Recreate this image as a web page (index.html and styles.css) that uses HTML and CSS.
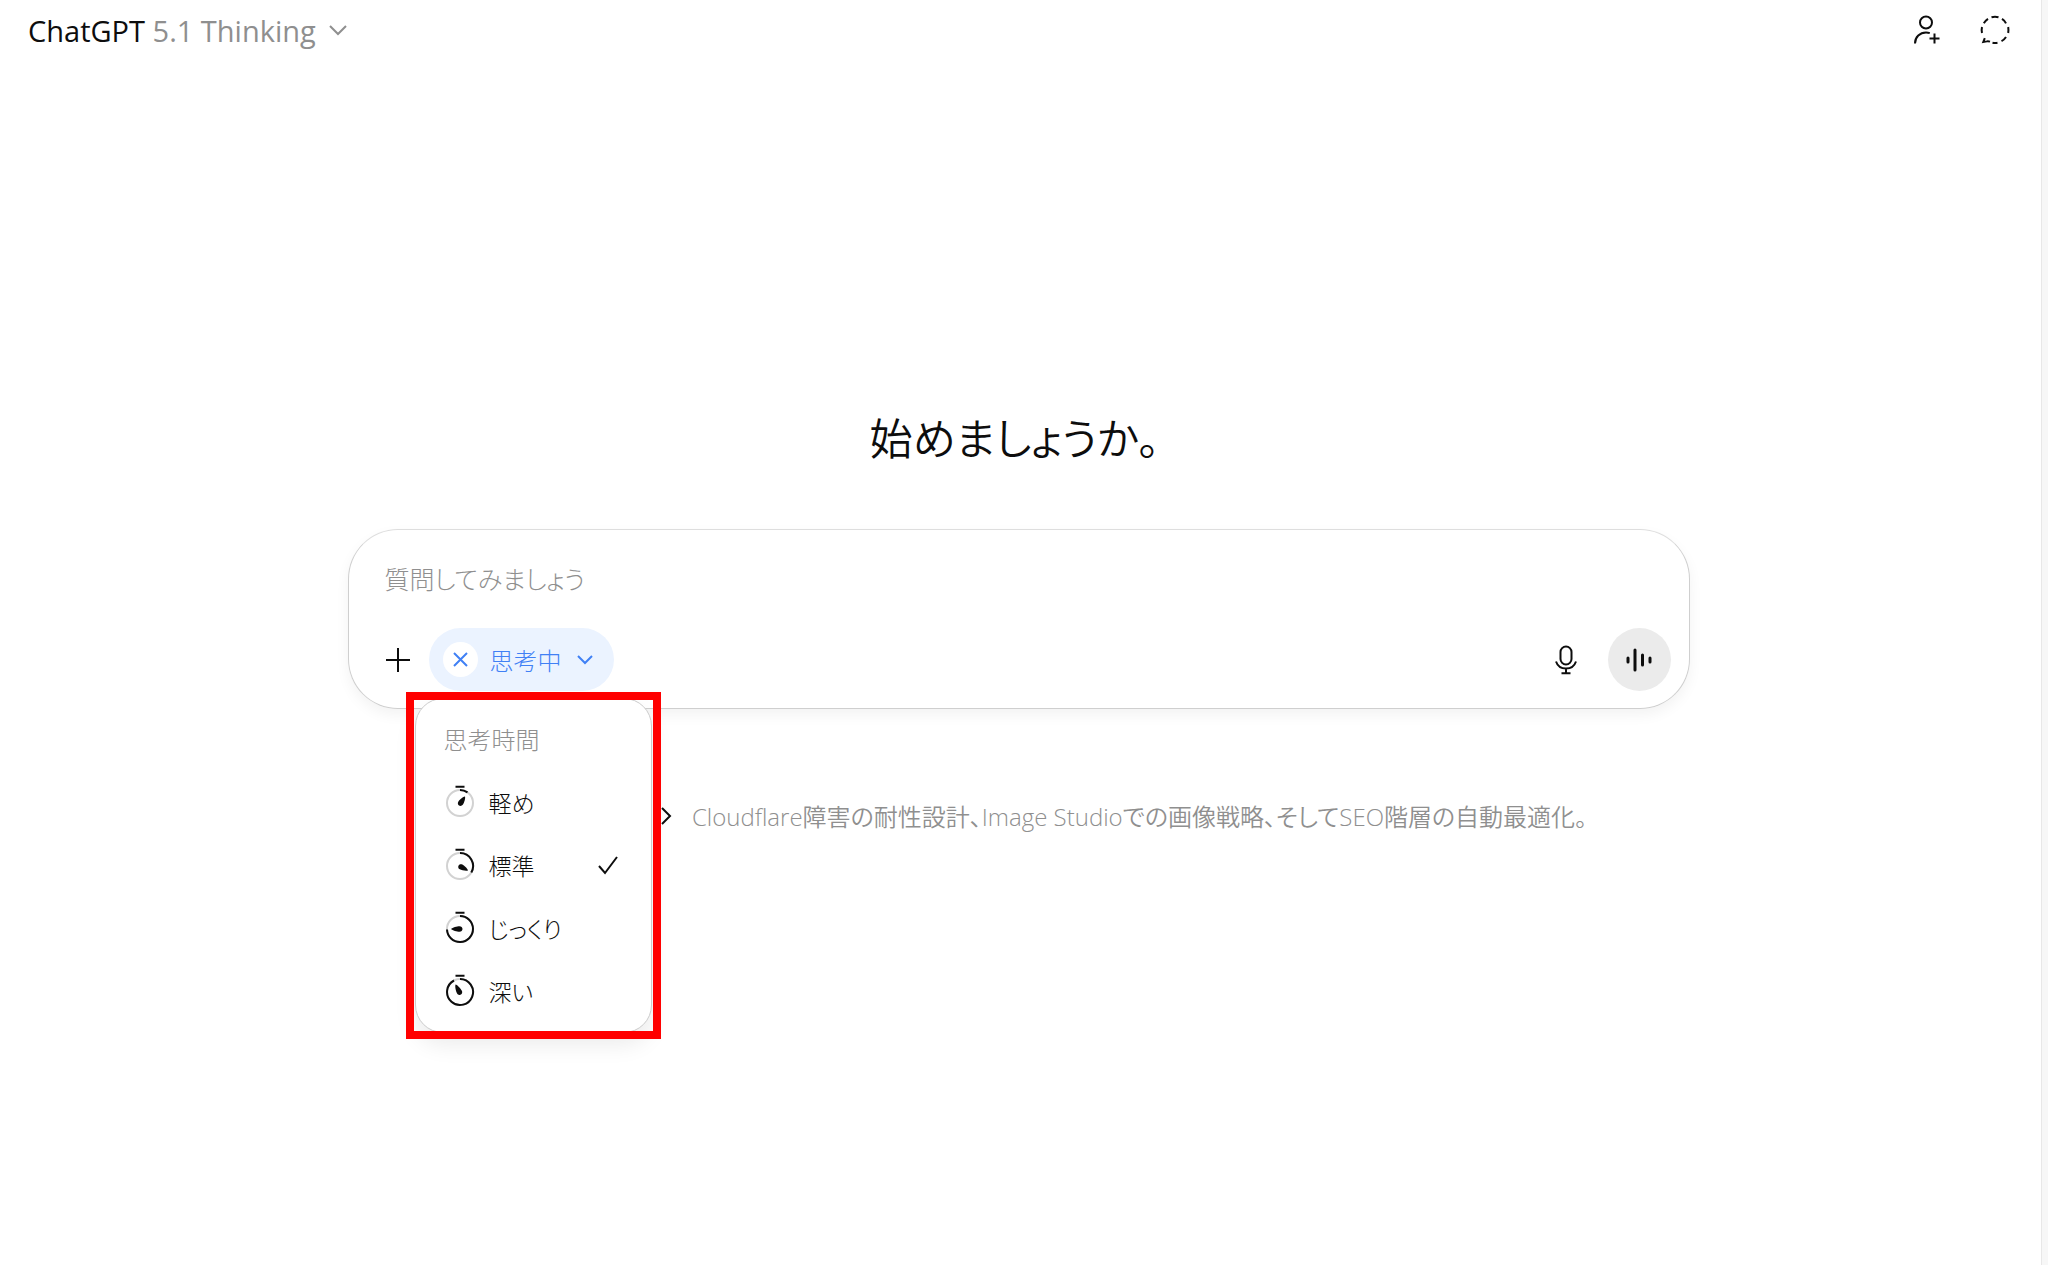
FILE: index.html
```
<!DOCTYPE html>
<html lang="ja">
<head>
    <meta charset="UTF-8">
    <meta name="viewport" content="width=device-width, initial-scale=1.0">
    <title>ChatGPT</title>
    <link rel="stylesheet" href="styles.css">
</head>
<body>
    <div class="app">
        <header class="header">
            <button class="header__model" type="button">
                <span>ChatGPT <span class="header__version">5.1 Thinking</span></span>
                <svg width="20" height="12" viewBox="0 0 20 12"><path d="M2 2l8 8 8-8"/></svg>
            </button>
            <div class="header__actions">
                <button class="icon-button" type="button" aria-label="招待">
                    <svg width="30" height="32" viewBox="0 0 30 32"><circle cx="13" cy="8.5" r="6"/><path d="M2 29.5C2 23 7 18.5 13 18.5c1.300 0 2.600.2 3.800.6M21.500 19.500v10M16.500 24.500h10"/></svg>
                </button>
                <button class="icon-button" type="button" aria-label="一時チャット">
                    <svg width="32" height="32" viewBox="0 0 32 32"><path d="M12.500 3.200q3.500-1 7 0M23 4.800q2.800 1.800 4 4.500M29.200 13q.5 3 0 6M27 23q-1.800 2.800-4.500 4.200M18.500 28.800q-2.500.5-5-.1M11 27.600q-2-.6-3.200-.2L4.300 28l1.500-3.800M3 19q-.700-3 0-6M4.800 9.200Q6.500 6.500 9 4.800"/></svg>
                </button>
            </div>
        </header>
        <main class="main">
            <h1 class="main__title">始めましょうか。</h1>
            <form class="composer">
                <input class="composer__input" type="text" placeholder="質問してみましょう" aria-label="質問してみましょう">
                <div class="composer__tools">
                    <button class="icon-button" type="button" aria-label="追加">
                        <svg width="26" height="26" viewBox="0 0 26 26"><path d="M13 1v24M1 13h24"/></svg>
                    </button>
                    <div class="thinking">
                        <div class="thinking__pill">
                            <button class="thinking__close" type="button" aria-label="解除">
                                <svg width="17" height="17" viewBox="0 0 17 17"><path d="M2 2l13 13M15 2L2 15"/></svg>
                            </button>
                            <button class="thinking__label" type="button" aria-haspopup="menu">
                                思考中
                                <svg width="18" height="12" viewBox="0 0 18 12"><path d="M2 2l7 7 7-7"/></svg>
                            </button>
                        </div>
                        <div class="popover">
                            <div class="menu" role="menu">
                                <div class="menu__title">思考時間</div>
                                <button class="menu__item" type="button" role="menuitem">
                                    <svg width="30" height="34" viewBox="0 0 30 34"><circle class="ring" cx="15" cy="18" r="13"/><path d="M15 5a13 13 0 0 1 7.500 2.400M10.500 1.800h9"/><path class="hand" d="M20 11.500c.6 2-1 6.500-2 8-1 1.400-2.800 1.800-4 1s-1.500-2.500-.7-3.800c1-1.500 4-4.800 6.700-5.200z"/></svg>
                                    軽め
                                </button>
                                <button class="menu__item" type="button" role="menuitem">
                                    <svg width="30" height="34" viewBox="0 0 30 34"><circle class="ring" cx="15" cy="18" r="13"/><path d="M15 5a13 13 0 0 1 11.300 19.500M10.500 1.800h9"/><path class="hand" d="M23 22.500c-2 .7-6.500-.2-8.200-1.200-1.500-.8-2-2.600-1.200-3.900s2.500-1.600 3.800-.8c1.600 1 5 3.600 5.600 5.900z"/></svg>
                                    標準
                                    <svg class="menu__check" width="22" height="20" viewBox="0 0 22 20"><path d="M2 11l6 7L20 2"/></svg>
                                </button>
                                <button class="menu__item" type="button" role="menuitem">
                                    <svg width="30" height="34" viewBox="0 0 30 34"><circle class="ring" cx="15" cy="18" r="13"/><path d="M15 5A13 13 0 1 1 2 18.500M10.500 1.800h9"/><path class="hand" d="M6 18c1.500-1.500 6-2.800 8.500-2.800 1.700 0 3 1.200 3 2.800s-1.300 2.800-3 2.800C12 20.800 7.500 19.500 6 18z"/></svg>
                                    じっくり
                                </button>
                                <button class="menu__item" type="button" role="menuitem">
                                    <svg width="30" height="34" viewBox="0 0 30 34"><circle class="ring" cx="15" cy="18" r="13"/><path d="M15 5A13 13 0 1 1 9 6.500M10.500 1.800h9"/><path class="hand" d="M10.500 10.500c2 .4 5 4 6.200 6 .9 1.400.6 3.200-.7 4s-3 .3-3.900-1.100c-1.200-2-2.300-6.800-1.600-8.900z"/></svg>
                                    深い
                                </button>
                            </div>
                        </div>
                    </div>
                    <div class="composer__voice">
                        <button class="icon-button" type="button" aria-label="音声入力">
                            <svg width="24" height="30" viewBox="0 0 24 30"><rect x="6.500" y="1.500" width="11" height="18" rx="5.500"/><path d="M2 16.500c1.500 4.500 5.500 7 10 7s8.500-2.500 10-7M12 23.500v4.500M7.500 28.200h9"/></svg>
                        </button>
                        <button class="voice-button" type="button" aria-label="音声モード">
                            <svg width="26" height="24" viewBox="0 0 26 24"><path d="M2 10v4M9 2v20M16.500 7v10M24 10v4"/></svg>
                        </button>
                    </div>
                </div>
            </form>
            <a class="suggestion" href="#">
                <svg width="12" height="20" viewBox="0 0 12 20"><path d="M2 2l8 8-8 8"/></svg>
                Cloudflare障害の耐性設計、Image Studioでの画像戦略、そしてSEO階層の自動最適化。
            </a>
        </main>
    </div>
</body>
</html>
```
FILE: styles.css
```
* {
    box-sizing: border-box;
}
body {
    margin: 0;
    padding-right: 6px;
    background-color: #f7f7f7;
    color: #0d0d0d;
    font-family: "Open Sans", "Noto Sans CJK JP", sans-serif;
    font-feature-settings: "palt";
    font-weight: 300;
}
button,
input {
    margin: 0;
    padding: 0;
    border: none;
    background: none;
    color: inherit;
    font: inherit;
    font-feature-settings: inherit;
}
button {
    display: flex;
    align-items: center;
    cursor: pointer;
}
svg {
    flex: none;
    fill: none;
    stroke: currentColor;
    stroke-width: 2;
}
.app {
    min-height: 100vh;
    background-color: #fff;
    border-right: 1px solid #e8e8e8;
}
.header {
    display: flex;
    justify-content: space-between;
    align-items: center;
    height: 60px;
    padding: 0 30px 0 28px;
}
.header__model {
    gap: 12px;
    font-size: 29px;
    font-weight: 400;
}
.header__version,
.header__model svg {
    color: #8f8f8f;
}
.header__actions {
    display: flex;
    gap: 36px;
}
.main {
    display: flex;
    flex-direction: column;
    align-items: center;
    padding: 342px 28px 0 24px;
}
.main__title {
    margin: 0 0 53px;
    padding-right: 8px;
    font-size: 43px;
    font-weight: 350;
    line-height: 74px;
}
/* Caja de mensaje */
.composer {
    width: 100%;
    max-width: 1342px;
    padding: 18px 18px 17px 36px;
    border: 1px solid #cfcfcf;
    border-top-color: #dedede;
    border-radius: 50px;
    box-shadow: 0 6px 14px rgba(0, 0, 0, 0.05);
}
.composer__input {
    display: block;
    width: 100%;
    height: 62px;
    margin-bottom: 18px;
    font-size: 25px;
    outline: none;
}
.composer__input::placeholder {
    color: #8f8f8f;
    opacity: 1;
}
.composer__tools {
    display: flex;
    align-items: center;
}
.composer__voice {
    display: flex;
    align-items: center;
    gap: 30px;
    margin-left: auto;
}
.voice-button {
    justify-content: center;
    width: 63px;
    height: 63px;
    border-radius: 50%;
    background-color: #ebebeb;
}
.voice-button svg {
    stroke-width: 3;
    stroke-linecap: round;
}
.thinking {
    position: relative;
    margin-left: 18px;
}
.thinking__pill {
    display: flex;
    align-items: center;
    gap: 12px;
    height: 63px;
    padding: 0 20px 0 14px;
    border-radius: 32px;
    background-color: #ebf3ff;
    color: #4080f5;
}
.thinking__close {
    justify-content: center;
    width: 35px;
    height: 35px;
    border-radius: 50%;
    background-color: #fff;
}
.thinking__label {
    gap: 14px;
    font-size: 24px;
}
/* Menú con marco rojo */
.popover {
    position: absolute;
    top: 64px;
    left: -23px;
    width: 255px;
    padding: 6px 9px;
}
.popover::after {
    content: "";
    position: absolute;
    inset: 0;
    border: 8px solid #f00;
    pointer-events: none;
}
.menu {
    padding: 10px 0 9px;
    border: 1px solid #ccc;
    border-radius: 28px;
    background-color: #fff;
    box-shadow: 0 12px 22px rgba(0, 0, 0, 0.08);
    font-size: 24px;
}
.menu__title {
    padding-left: 28px;
    color: #8f8f8f;
    line-height: 62px;
}
.menu__item {
    gap: 14px;
    width: 100%;
    height: 63px;
    padding: 0 32px 2px 29px;
    font-size: 23px;
}
.menu__item .ring {
    stroke: #d2d2d2;
}
.menu__item .hand {
    fill: currentColor;
    stroke: none;
}
.menu__check {
    margin-left: auto;
}
.suggestion {
    display: flex;
    align-items: center;
    gap: 20px;
    margin-top: 89px;
    padding-left: 210px;
    color: #8f8f8f;
    font-size: 24px;
    font-weight: 350;
    text-decoration: none;
}
.suggestion svg {
    color: #0d0d0d;
}
```
